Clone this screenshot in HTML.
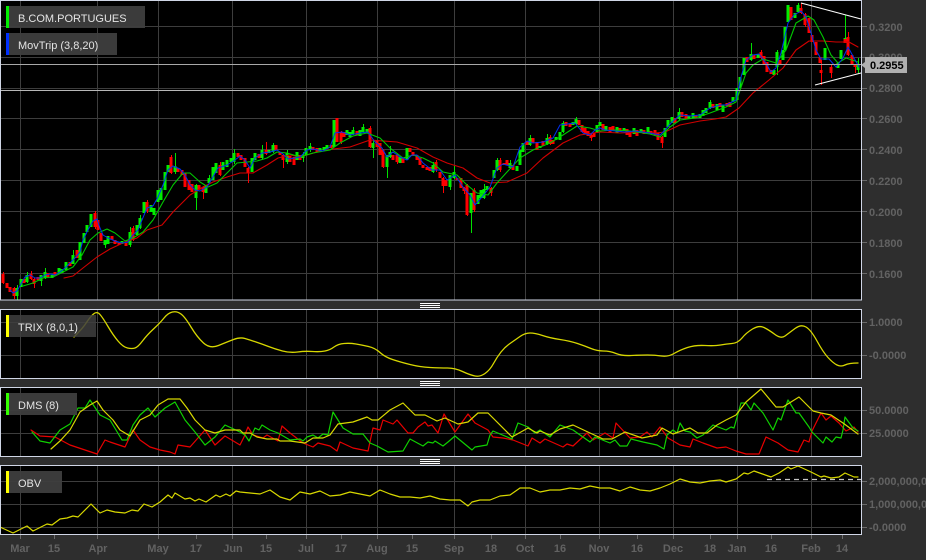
<!DOCTYPE html>
<html><head><meta charset="utf-8"><style>
html,body{margin:0;padding:0;background:#2e2e2e;width:926px;height:560px;overflow:hidden}
svg{display:block}
text{font-family:"Liberation Sans",sans-serif}
.t{font-size:11px;font-weight:bold;fill:#626262}
.l{font-size:11px;fill:#e4e4e4}
</style></head><body>
<svg width="926" height="560" viewBox="0 0 926 560" xmlns="http://www.w3.org/2000/svg">
<rect width="926" height="560" fill="#2e2e2e"/>
<rect x="1" y="1" width="860" height="299" fill="#000"/>
<rect x="1" y="309" width="860" height="69" fill="#000"/>
<rect x="1" y="387" width="860" height="69" fill="#000"/>
<rect x="1" y="465" width="860" height="69" fill="#000"/>
<!-- grid -->
<path fill="none" stroke="#3d3d3d" stroke-width="1" d="M20.5 1V300M97.5 1V300M158.5 1V300M232.5 1V300M306.5 1V300M377.5 1V300M454.5 1V300M525.5 1V300M599.5 1V300M673.5 1V300M737.5 1V300M811.5 1V300
M20.5 309V378M97.5 309V378M158.5 309V378M232.5 309V378M306.5 309V378M377.5 309V378M454.5 309V378M525.5 309V378M599.5 309V378M673.5 309V378M737.5 309V378M811.5 309V378
M20.5 387V456M97.5 387V456M158.5 387V456M232.5 387V456M306.5 387V456M377.5 387V456M454.5 387V456M525.5 387V456M599.5 387V456M673.5 387V456M737.5 387V456M811.5 387V456
M20.5 465V534M97.5 465V534M158.5 465V534M232.5 465V534M306.5 465V534M377.5 465V534M454.5 465V534M525.5 465V534M599.5 465V534M673.5 465V534M737.5 465V534M811.5 465V534
M1 26.5H861M1 57.5H861M1 88.5H861M1 118.5H861M1 149.5H861M1 180.5H861M1 211.5H861M1 242.5H861M1 273.5H861
M1 322.5H861M1 355.5H861M1 410.5H861M1 433.5H861M1 481.5H861M1 504.5H861M1 527.5H861"/>
<!-- candle wicks -->
<path fill="none" stroke="#00e000" stroke-width="1" d="M17.5 285V300M27.5 272V283M41.5 275V286M45.5 268V279M73.5 250V264M105.5 240V248M130.5 227V247M140.5 215V229M175.5 153V174M196.5 184V210M209.5 175V184M234.5 149V164M262.5 145V159M273.5 143V153M287.5 150V164M303.5 152V162M310.5 143V152M353.5 127V135M363.5 124V133M373.5 140V158M387.5 155V178M390.5 146V158M433.5 162V173M450.5 175V190M454.5 166V179M471.5 193V233M484.5 184V199M497.5 158V171M510.5 160V169M530.5 135V146M547.5 134V145M563.5 121V133M576.5 117V125M679.5 108V120M710.5 100V109M751.5 43V61M777.5 50V75M798.5 3V13M845.5 15V43M858.5 58V73"/>
<path fill="none" stroke="#ff0000" stroke-width="1" d="M3.5 272V284M14.5 287V299M31.5 271V280M34.5 278V288M95.5 211V229M133.5 226V241M147.5 200V213M171.5 155V174M203.5 186V199M220.5 162V176M248.5 167V183M266.5 142V155M283.5 154V168M341.5 131V144M370.5 126V148M383.5 149V168M397.5 154V164M436.5 160V172M443.5 177V193M464.5 187V194M467.5 184V216M474.5 188V212M491.5 187V196M500.5 158V172M550.5 135V145M591.5 134V141M662.5 136V148M761.5 50V59M801.5 3V14M805.5 13V27M821.5 60V85M831.5 65V78M848.5 32V56M855.5 64V73"/>
<!-- candle bodies -->
<g shape-rendering="crispEdges">
<path fill="none" stroke="#00ee00" stroke-width="3" d="M17 288V296M21 279V287M27 275V282M41 275V281M45 272V278M52 275V278M59 268V274M62 269V273M66 262V270M73 255V264M80 242V260M84 233V243M87 225V232M91 214V227M105 240V245M108 236V244M122 241V244M130 232V245M137 225V235M140 218V228M144 202V213M151 205V212M154 208V215M158 190V202M161 188V200M165 172V190M168 165V172M175 166V172M196 185V198M206 185V193M209 178V183M213 167V180M216 163V173M223 162V170M227 160V167M231 158V162M234 153V162M252 158V172M255 153V160M262 150V158M269 150V153M273 145V152M287 153V162M297 152V160
M303 155V158M306 148V155M310 146V150M320 148V151M324 147V150M327 145V149M334 120V147M347 130V135M350 132V137M353 130V134M360 130V136M363 127V132M367 129V133M373 143V148M387 155V167M390 152V157M400 157V163M407 148V160M433 165V172M450 175V187M454 172V178M471 193V213M478 195V204M481 190V198M484 189V198M487 186V190M494 170V178M497 160V170M510 163V168M517 166V171M520 150V165M523 143V152M530 138V145M540 146V148M547 138V144M556 137V140M560 132V140M563 123V132M573 122V125M576 119V124M597 125V133M600 122V126
M606 126V130M617 127V133M624 128V131M634 128V134M641 129V133M648 127V133M665 128V137M668 120V127M672 117V123M679 112V119M689 116V119M693 113V118M700 114V118M703 110V116M706 108V113M710 102V108M717 104V110M723 105V112M733 97V102M737 88V100M740 77V88M744 58V75M751 54V60M758 54V58M774 70V75M777 52V67M783 50V60M785 27V50M788 5V22M795 13V18M798 5V12M825 48V60M838 63V68M841 50V59M845 38V42M858 65V70"/>
<path fill="none" stroke="#ff0000" stroke-width="3" d="M3 274V283M7 283V288M10 287V292M14 288V296M24 279V283M31 274V279M34 279V284M38 277V280M48 273V277M55 272V276M70 262V266M77 250V258M95 213V227M98 220V230M101 233V241M112 236V240M115 240V244M119 243V245M126 243V246M133 228V240M147 202V211M171 157V173M178 168V172M182 170V175M185 173V187M189 180V190M192 184V192M199 185V190M203 187V192M220 165V175M238 153V157M241 155V160M245 158V167M248 168V173M259 154V158M266 150V154M276 145V150M280 152V155M283 155V160M290 156V162M294 157V165M300 155V160
M313 147V150M317 148V152M331 145V148M337 118V142M341 132V142M344 132V137M357 131V135M370 128V147M377 140V147M380 143V155M383 150V167M393 155V160M397 155V162M403 158V163M410 148V152M413 152V156M417 155V160M420 158V165M423 165V168M427 167V170M430 167V171M436 162V170M440 172V178M443 178V186M446 180V186M457 178V180M461 178V188M464 188V191M467 185V215M474 190V210M491 188V193M500 160V170M504 163V165M507 160V165M513 165V170M527 141V145M533 138V143M537 142V150M543 141V146M550 137V144M553 140V144M566 122V126M570 124V127M579 120V125M582 125V132M585 128V134M588 131V136M591 135V138M594 133V137M603 124V130
M610 127V133M613 126V130M620 128V132M627 129V135M630 133V137M637 130V136M644 130V134M651 131V134M655 130V135M658 133V140M662 137V143M675 118V123M682 112V117M686 114V119M696 115V118M713 104V108M720 103V107M727 103V106M730 102V107M747 57V62M754 55V59M761 52V58M764 56V64M767 62V72M771 70V74M780 60V64M791 7V20M801 8V13M805 14V25M809 18V33M812 35V42M816 42V55M820 57V63M821 70V73M831 67V73M845 39V43M848 37V55M852 55V65M855 65V67"/>
</g>
<!-- MAs -->
<g fill="none" stroke-linejoin="round" stroke-linecap="round">
<polyline stroke="#d00000" stroke-width="1.1" points="64,278 73,276 83,268 97,257 110,249 125,242 137,238 147,230 162,225 173,212 190,195 203,187 213,182 227,177 240,173 253,173 267,165 278,158 290,155 300,157 317,152 333,149 350,147 370,140 397,142 407,145 417,148 433,157 447,163 463,168 477,178 490,183 507,182 527,173 543,158 563,143 580,135 600,132 620,133 640,132 655,133 665,132 680,125 700,121 715,119 726,117 739,108 753,93 769,80 783,68 796,50 809,41 823,41 836,42 849,42 858,47"/>
<polyline stroke="#00c800" stroke-width="1.1" points="23,286 33,283 43,278 53,277 63,272 73,267 82,255 90,240 98,233 107,229 115,233 125,241 133,238 143,232 153,220 163,202 173,185 183,173 190,173 200,182 208,187 217,183 227,173 237,163 247,162 257,161 267,158 277,152 287,153 300,157 313,153 330,150 340,143 353,136 367,133 380,138 390,148 403,158 413,155 423,158 433,163 443,172 457,175 467,185 477,193 488,195 497,183 507,172 520,158 533,150 550,143 563,135 577,126 590,128 600,131 615,130 630,131 650,134 660,137 670,127 680,120 695,118 710,113 726,107 736,102 746,73 753,65 763,59 776,63 786,50 796,23 808,16 814,20 823,37 831,55 838,63 846,58 858,62"/>
<polyline stroke="#0030f0" stroke-width="1" points="10,290 13,293 17,291 21,284 25,277 30,275 35,278 40,278 45,275 50,274 55,275 60,272 65,268 70,263 75,258 80,252 83,240 88,230 93,221 97,219 100,228 103,235 108,238 115,241 122,243 128,242 133,235 138,230 142,220 147,208 153,206 158,197 163,185 168,170 173,166 180,169 185,175 190,185 195,190 200,191 207,187 213,177 218,168 227,165 235,160 240,156 245,160 250,168 255,158 262,153 270,152 277,150 283,154 288,159 295,158 300,157 307,150 313,149 323,151 330,147 335,133 342,132 350,135 360,133 368,132 375,142 382,148 387,157 393,152 400,157 407,160 412,155 417,155 423,163 432,170 440,170 447,180 455,175 463,187 470,195 475,205 482,197 490,187 497,168 503,164 513,167 520,147 527,141 533,143 543,142 553,138 560,125 567,124 575,123 583,133 590,135 595,130 600,128 605,130 615,131 625,132 635,131 650,133 660,135 665,130 672,122 680,115 690,116 700,115 710,108 720,105 726,105 736,100 741,77 746,60 753,55 759,54 766,63 771,72 776,68 781,53 788,23 794,15 801,11 806,17 811,33 816,50 821,59 829,59 836,67 843,58 848,47 854,58 859,67"/>
<!-- TRIX -->
<path stroke="#d8d800" stroke-width="1.3" d="M74 337Q83 328 86.5 322.5Q90 317 93.5 314Q97 311 100 314.5Q103 318 108 326.5Q113 335 118 341Q123 347 127.5 348Q132 349 135 348Q138 347 142.5 341Q147 335 153.5 329Q160 323 164 318Q168 313 172.5 312Q177 311 181 314Q185 317 191 327Q197 337 203.5 343Q210 349 218.5 345.5Q227 342 233.5 339.5Q240 337 245 338.5Q250 340 256 342Q262 344 268.5 346.5Q275 349 282.5 351Q290 353 297.5 352Q305 351 312.5 351.5Q320 352 325 351Q330 350 334 347Q338 344 344 343.5Q350 343 356 344Q362 345 368.5 346.5Q375 348 380 352.5Q385 357 392.5 359.5Q400 362 410 364.5Q420 367 430 367.5Q440 368 447.5 368Q455 368 462.5 371.5Q470 375 475 376Q480 377 485 373.5Q490 370 493.5 363.5Q497 357 501 352Q505 347 510 343.5Q515 340 520 336.5Q525 333 530 333Q535 333 542.5 335.5Q550 338 560 339.5Q570 341 577.5 343.5Q585 346 591 348.5Q597 351 603.5 351Q610 351 616 353.5Q622 356 631 355.5Q640 355 647.5 355Q655 355 661.5 356Q668 357 674 353.5Q680 350 687.5 347.5Q695 345 705 345.5Q715 346 720.5 345Q726 344 732 343.5Q738 343 742 338Q746 333 752.5 329Q759 325 764 327.5Q769 330 775 334.5Q781 339 785 336Q789 333 795 328.5Q801 324 806 327Q811 330 817 341Q823 352 828 357.5Q833 363 837 365Q841 367 845 365Q849 363 858 363"/>
<!-- DMS -->
<polyline stroke="#e80000" stroke-width="1.2" points="31,430 40,436 55,437 70,445 85,450 97,454 105,440 110,442 125,447 133,430 140,440 150,447 160,450 170,452 175,454 178,445 190,447 205,430 215,445 225,436 240,445 244,437 248,427 253,435 263,438 267,435 278,441 282,426 290,433 303,443 313,447 318,443 330,446 337,451 340,442 353,448 368,451 373,428 380,430 383,420 393,424 397,420 408,433 413,433 418,427 425,422 428,426 432,425 438,433 444,414 455,432 468,414 475,423 488,430 493,437 503,438 513,440 528,446 532,438 540,443 545,439 563,447 567,444 573,446 587,433 593,440 605,433 613,438 616,423 630,438 640,437 647,432 652,437 660,427 668,438 680,445 690,447 693,439 703,443 717,448 726,447 736,451 746,454 759,454 766,437 778,443 788,450 798,452 804,440 809,442 812,431 821,413 826,420 831,416 839,423 846,431 854,427 858,432"/>
<polyline stroke="#10d000" stroke-width="1.2" points="32,432 40,441 50,443 60,430 70,424 78,408 85,408 90,400 100,415 110,420 122,440 127,440 133,425 140,415 148,408 155,417 165,408 175,402 185,420 195,432 205,445 215,437 225,425 240,432 245,435 249,441 255,428 259,430 262,425 270,430 278,433 290,440 300,439 303,441 307,437 313,435 318,438 323,434 328,435 333,412 343,428 353,434 363,434 370,443 377,446 388,452 403,451 410,439 423,446 428,442 433,443 435,441 443,446 448,442 455,436 472,450 475,447 487,445 490,435 493,431 512,439 518,423 528,427 535,433 540,430 550,437 560,425 573,430 590,442 595,437 610,443 615,440 620,446 627,446 631,439 643,442 657,445 664,449 667,435 673,430 677,433 680,423 685,431 690,432 697,438 703,435 713,425 726,430 731,427 734,428 741,403 746,403 751,410 754,403 763,413 773,430 778,418 781,420 788,400 796,413 799,413 809,427 812,432 823,443 826,437 832,442 836,437 841,438 843,430 845,417 853,428 858,431"/>
<polyline stroke="#d8d800" stroke-width="1.2" points="51,449 60,441 70,430 80,412 90,405 97,401 103,410 113,420 120,430 130,436 140,420 150,415 158,405 168,399 180,399 187,408 195,420 205,430 215,433 225,430 240,430 243,433 250,433 257,437 267,439 277,439 280,441 290,441 305,443 313,438 323,438 330,435 338,424 353,422 367,417 372,420 378,420 390,410 403,403 415,415 425,415 437,421 445,418 458,424 468,422 478,413 488,413 512,437 528,428 537,433 540,431 550,435 560,429 573,425 590,433 603,439 612,439 625,432 642,438 657,435 662,428 673,434 690,428 698,433 707,433 717,425 726,420 736,415 746,402 761,389 776,407 783,407 799,397 813,411 821,413 831,415 843,423 858,434"/>
<!-- OBV -->
<polyline stroke="#d8d800" stroke-width="1.2" points="0,527 13,533 27,526 33,531 47,524 52,525 60,519 67,518 73,516 78,517 91,504 100,513 107,510 115,512 125,513 132,510 138,511 144,504 152,507 160,502 168,495 172,498 175,493 185,499 190,498 195,501 199,499 206,502 216,495 220,497 226,494 230,496 236,491 240,492 250,493 260,494 270,490 280,497 290,500 300,492 310,494 320,491 330,496 340,495 350,492 360,494 370,496 380,490 390,494 400,497 410,497 420,498 430,496 440,499 450,500 460,500 468,506 472,502 480,500 490,500 500,496 510,495 520,488 530,488 540,492 550,490 560,490 570,488 580,489 590,486 600,488 610,488 620,491 630,487 640,490 650,491 660,488 670,484 680,479 690,482 700,483 710,481 720,480 726,482 736,479 744,473 748,474 754,471 771,477 779,473 788,467 791,469 798,466 811,472 821,477 824,476 831,478 839,477 845,473 854,477 858,477"/>
</g>
<!-- dashed support on OBV -->
<path fill="none" stroke="#c8c8c8" stroke-width="1.2" stroke-dasharray="5 4" d="M767 479.5H861"/>
<!-- price lines + trend lines -->
<path fill="none" stroke="#a8a8a8" stroke-width="1" d="M0 64.5H861"/>
<path fill="none" stroke="#b8b8b8" stroke-width="1" d="M0 90.5H861"/>
<path fill="none" stroke="#ffffff" stroke-width="1" d="M801 3L861 19M815 85L861 73"/>
<!-- panel borders -->
<g fill="none" stroke="#d0d6e6" stroke-width="1">
<rect x="0.5" y="0.5" width="861" height="299.5"/>
<rect x="0.5" y="309.5" width="861" height="69"/>
<rect x="0.5" y="387.5" width="861" height="69"/>
<rect x="0.5" y="465.5" width="861" height="69"/>
</g>
<!-- handles -->
<path fill="none" stroke="#ffffff" stroke-width="1" d="M420 303.5H440M420 305.5H440M420 307.5H440M420 381.5H440M420 383.5H440M420 385.5H440M420 459.5H440M420 461.5H440M420 463.5H440"/>
<!-- right ticks -->
<path fill="none" stroke="#6a6a6a" stroke-width="1" d="M862 26.5H867M862 57.5H867M862 88.5H867M862 118.5H867M862 149.5H867M862 180.5H867M862 211.5H867M862 242.5H867M862 273.5H867M862 322.5H867M862 355.5H867M862 410.5H867M862 433.5H867M862 481.5H867M862 504.5H867M862 527.5H867
M20.5 535V539M54.5 535V539M97.5 535V539M158.5 535V539M196.5 535V539M232.5 535V539M266.5 535V539M306.5 535V539M341.5 535V539M377.5 535V539M412.5 535V539M454.5 535V539M491.5 535V539M525.5 535V539M560.5 535V539M599.5 535V539M637.5 535V539M673.5 535V539M710.5 535V539M737.5 535V539M771.5 535V539M811.5 535V539M842.5 535V539"/>
<!-- right labels -->
<g class="t">
<text class="t" x="869" y="31">0.3200</text>
<text class="t" x="869" y="61">0.3000</text>
<text class="t" x="869" y="92">0.2800</text>
<text class="t" x="869" y="123">0.2600</text>
<text class="t" x="869" y="154">0.2400</text>
<text class="t" x="869" y="185">0.2200</text>
<text class="t" x="869" y="216">0.2000</text>
<text class="t" x="869" y="247">0.1800</text>
<text class="t" x="869" y="278">0.1600</text>
<text class="t" x="869" y="326">1.0000</text>
<text class="t" x="869" y="359">-0.0000</text>
<text class="t" x="869" y="414">50.0000</text>
<text class="t" x="869" y="437">25.0000</text>
<text class="t" x="869" y="485">2,000,000,0</text>
<text class="t" x="869" y="508">1,000,000,0</text>
<text class="t" x="869" y="531">-0.0000</text>
</g>
<!-- price tag -->
<path d="M865 57H907V73H865V68L861 65L865 62Z" fill="#b0b0b0"/>
<text x="870" y="69" font-size="11" font-weight="bold" fill="#000">0.2955</text>
<!-- x labels -->
<g text-anchor="middle">
<text class="t" x="20" y="552" text-anchor="middle">Mar</text>
<text class="t" x="54" y="552" text-anchor="middle">15</text>
<text class="t" x="98" y="552" text-anchor="middle">Apr</text>
<text class="t" x="158" y="552" text-anchor="middle">May</text>
<text class="t" x="196" y="552" text-anchor="middle">17</text>
<text class="t" x="233" y="552" text-anchor="middle">Jun</text>
<text class="t" x="266" y="552" text-anchor="middle">15</text>
<text class="t" x="306" y="552" text-anchor="middle">Jul</text>
<text class="t" x="341" y="552" text-anchor="middle">17</text>
<text class="t" x="377" y="552" text-anchor="middle">Aug</text>
<text class="t" x="412" y="552" text-anchor="middle">15</text>
<text class="t" x="454" y="552" text-anchor="middle">Sep</text>
<text class="t" x="491" y="552" text-anchor="middle">18</text>
<text class="t" x="525" y="552" text-anchor="middle">Oct</text>
<text class="t" x="560" y="552" text-anchor="middle">16</text>
<text class="t" x="599" y="552" text-anchor="middle">Nov</text>
<text class="t" x="637" y="552" text-anchor="middle">16</text>
<text class="t" x="673" y="552" text-anchor="middle">Dec</text>
<text class="t" x="710" y="552" text-anchor="middle">18</text>
<text class="t" x="737" y="552" text-anchor="middle">Jan</text>
<text class="t" x="771" y="552" text-anchor="middle">16</text>
<text class="t" x="811" y="552" text-anchor="middle">Feb</text>
<text class="t" x="842" y="552" text-anchor="middle">14</text>
</g>
<!-- legends -->
<rect x="6" y="6" width="139" height="22" fill="#3e3e3e" fill-opacity=".95"/>
<rect x="6" y="6" width="3" height="22" fill="#00ee00"/>
<text class="l" x="18" y="22">B.COM.PORTUGUES</text>
<rect x="6" y="33" width="111" height="22" fill="#3e3e3e" fill-opacity=".95"/>
<rect x="6" y="33" width="3" height="22" fill="#0030ff"/>
<text class="l" x="18" y="49">MovTrip (3,8,20)</text>
<rect x="6" y="315" width="90" height="22" fill="#3e3e3e" fill-opacity=".85"/>
<rect x="6" y="315" width="3" height="22" fill="#ffff00"/>
<text class="l" x="18" y="331">TRIX (8,0,1)</text>
<rect x="6" y="393" width="71" height="22" fill="#3e3e3e" fill-opacity=".95"/>
<rect x="6" y="393" width="3" height="22" fill="#33ff00"/>
<text class="l" x="18" y="409">DMS (8)</text>
<rect x="6" y="471" width="56" height="22" fill="#3e3e3e" fill-opacity=".95"/>
<rect x="6" y="471" width="3" height="22" fill="#ffff00"/>
<text class="l" x="18" y="487">OBV</text>
</svg>
</body></html>
